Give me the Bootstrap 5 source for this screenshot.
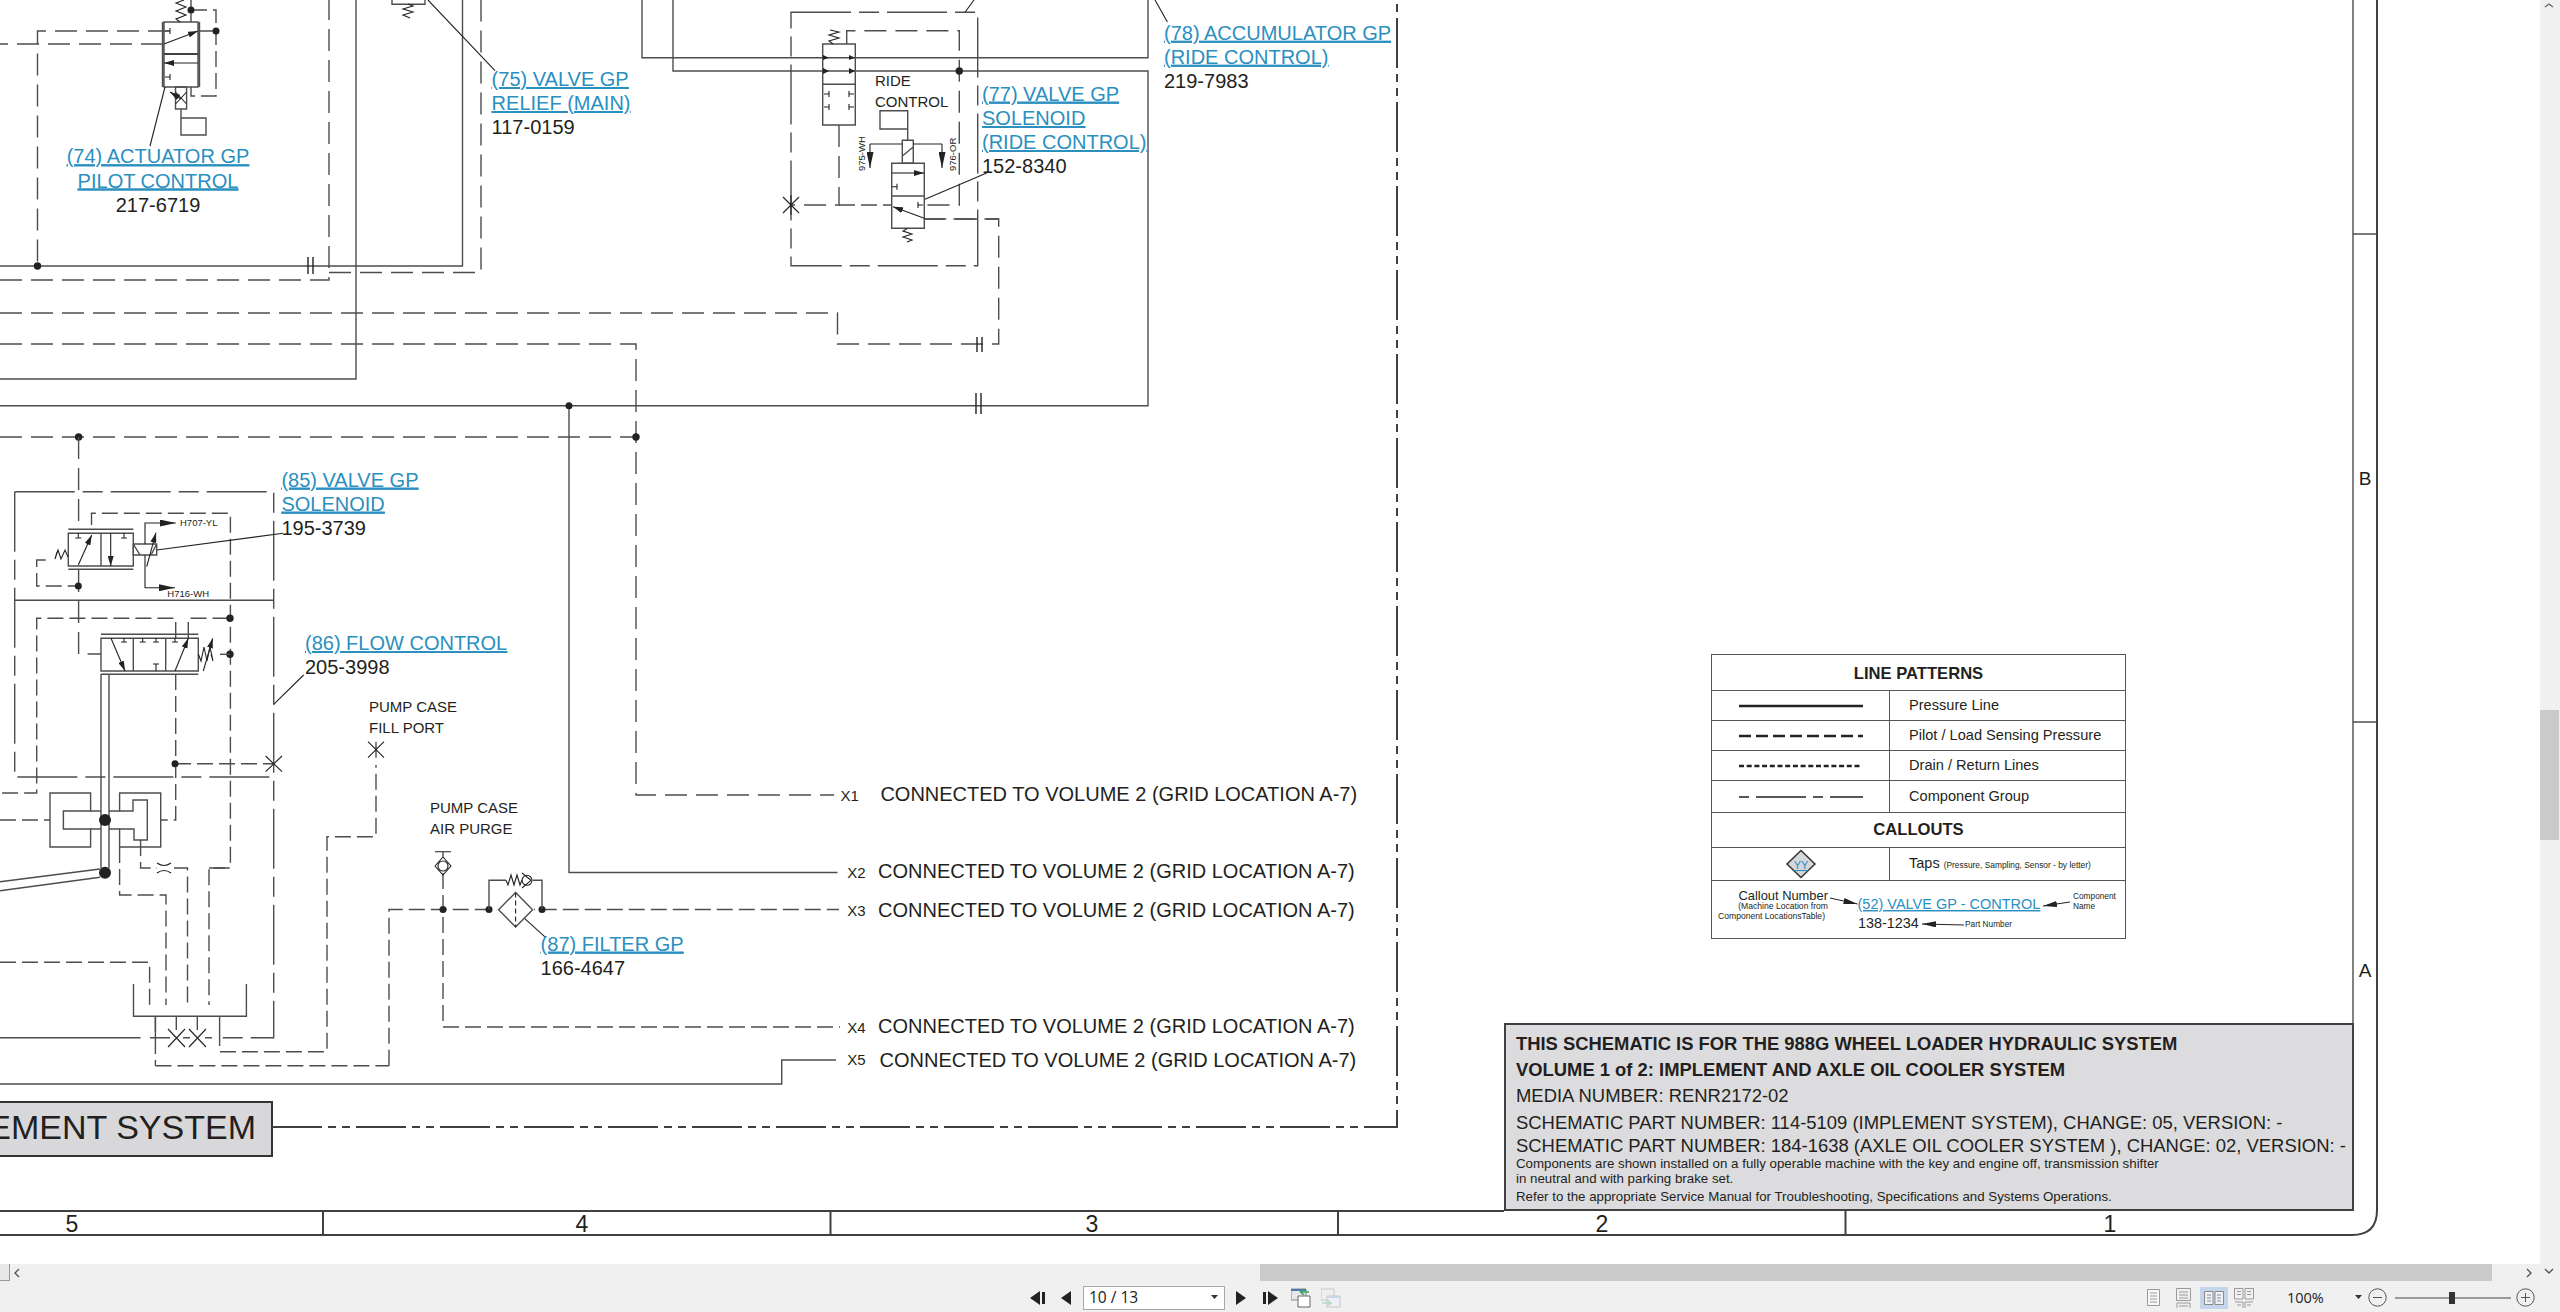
<!DOCTYPE html>
<html>
<head>
    <title>988G Hydraulic Schematic</title>
    <link href="https://cdn.jsdelivr.net/npm/bootstrap@5.3.2/dist/css/bootstrap.min.css" rel="stylesheet">
    <script src="https://cdn.jsdelivr.net/npm/bootstrap@5.3.2/dist/js/bootstrap.bundle.min.js"></script>
    <style>
        html, body { height: 100%; overflow: hidden; }
        body { font-family: "Liberation Sans", Arial, sans-serif; color: #231f20; background: #f0f0f0; }
        .viewer-top { height: 1281px; }
        .viewer-left { width: 2540px; }
        .sheet { height: 1264px; background: #fff; overflow: hidden; }
        .sheet-svg { display: block; }
        .sheet-svg text { font-family: "Liberation Sans", Arial, sans-serif; fill: #231f20; }
        .sheet-svg .part { font-size: 20px; }
        .sheet-svg .call { font-size: 20px; fill: #2b8fbf; text-decoration: underline; }
        .sheet-svg .conn { font-size: 20px; }
        .sheet-svg .note { font-size: 15px; }
        .sheet-svg .wire { font-size: 9.5px; }
        .sheet-svg .zone { font-size: 23px; }
        .sheet-svg .zone-side { font-size: 19px; }
        .sheet-svg .sys { font-size: 34px; }
        .ln { fill: none; stroke: #4d4d4d; stroke-width: 1.4; }
        .thin { fill: none; stroke: #222; stroke-width: 1.1; }
        .heavy { fill: none; stroke: #404040; stroke-width: 2; }
        .pilot { stroke-dasharray: 22 9; }
        .drain { stroke-dasharray: 16 6; }
        .longd { stroke-dasharray: 60 8 20 8; }
        .group { stroke-dasharray: 50 6 8 6 8 6; }
        .dot { fill: #222; }

        /* legend and title block sit on the sheet at their drawing coordinates */
        .legend-box { position: absolute; left: 1711px; top: 654px; width: 415px; }
        .legend-grid { table-layout: fixed; border-color: #555; color: #231f20; }
        .legend-grid td { padding: 0; background: transparent; vertical-align: middle; }
        .legend-grid .col-sample { width: 178px; }
        .legend-head { font-size: 16.6px; font-weight: 700; text-align: center; }
        .legend-first { padding-top: 3px !important; }
        .legend-text { font-size: 14.6px; padding-left: 19px !important; }
        .legend-small { font-size: 8.4px; }
        .legend-taps { font-size: 14.5px; }
        .rh-36 { height: 36px; }
        .rh-30 { height: 30px; }
        .rh-32 { height: 32px; }
        .rh-35 { height: 35px; }
        .rh-33 { height: 33px; }
        .legend-svg { display: block; }
        .legend-svg text { font-family: "Liberation Sans", Arial, sans-serif; fill: #231f20; }
        .title-block { position: absolute; left: 1504px; top: 1023px; width: 850px; height: 188px;
            background: #dcdcde; border: 2px solid #404040; padding-left: 10px; white-space: nowrap; }
        .tb-line { font-size: 18.45px; line-height: 26px; }
        .tb-strong { font-weight: 700; font-size: 18.4px; }
        .tb-first { margin-top: 5.5px; }
        .tb-tight { line-height: 20px; }
        .tb-wide { margin-top: 1px; }
        .tb-small { font-size: 13.3px; line-height: 15px; }
        .tb-last { margin-top: 3px; }

        .hbar { height: 17px; background: #f0f0f0; }
        .hbar-tab { width: 10px; height: 18px; border: 1px solid #999; border-left: 0; margin-top: -1px; background: #e8e8e8; }
        .hbar-left { margin-left: 2px; width: 1238px; }
        .hbar-thumb { width: 1232px; height: 17px; background: #cacaca; }
        .hbar-right { margin-left: 33px; }
        .vbar { width: 20px; background: #f0f0f0; }
        .vbar-gap { height: 697px; }
        .vbar-thumb { height: 130px; width: 19px; background: #cacaca; }

        .status { height: 31px; padding-top: 2px; background: #f0f0f0; font-family: "Open Sans", "Liberation Sans", sans-serif; font-size: 14.5px; color: #222; }
        .m-first { margin-left: 1030px; }
        .m-prev { margin-left: 15px; }
        .page-select { width: 142px; height: 24px; margin-left: 12px; background: #fff; border: 1px solid #a9a9a9; padding: 0 5px; font-size: 15.5px; }
        .m-next { margin-left: 11px; }
        .m-last { margin-left: 17px; }
        .m-view { margin-left: 12px; }
        .m-view2 { margin-left: 10px; }
        .m-layout { margin-left: 806px; }
        .m-layout2 { margin-left: 16px; }
        .m-layout3 { margin-left: 9px; }
        .m-layout4 { margin-left: 6px; }
        .layout-on { background: #c5d6ec; width: 28px; height: 22px; }
        .m-zoom { margin-left: 33px; width: 68px; }
        .m-slider { margin-left: 8px; }
        .m-plus { margin-left: 5px; }
    </style>
</head>
<body>
<div class="d-flex flex-column vh-100">
    <div class="d-flex viewer-top">
        <div class="viewer-left d-flex flex-column">
            <div class="sheet position-relative">
                <svg class="sheet-svg" width="2540" height="1264" viewBox="0 0 2540 1264">
                    <defs>
                        <marker id="ah" viewBox="0 0 10 6" refX="10" refY="3" markerWidth="10" markerHeight="6" markerUnits="userSpaceOnUse" orient="auto">
                            <path d="M0 0L10 3L0 6Z" fill="#222"/>
                        </marker>
                        <marker id="ahw" viewBox="0 0 16 7" refX="16" refY="3.5" markerWidth="16" markerHeight="7" markerUnits="userSpaceOnUse" orient="auto">
                            <path d="M0 0L16 3.5L0 7Z" fill="#222"/>
                        </marker>
                    </defs>

                    <!-- sheet frame -->
                    <path class="heavy" d="M2377 0V1210Q2377 1235 2352 1235H0"/>
                    <path class="ln" d="M2353 0V1023M2353 234H2377M2353 722H2377"/>
                    <path class="heavy" d="M0 1211H1504M323 1211V1235M830.5 1211V1235M1338 1211V1235M1845.5 1211V1235"/>
                    <text class="zone" x="72" y="1232" text-anchor="middle">5</text>
                    <text class="zone" x="582" y="1232" text-anchor="middle">4</text>
                    <text class="zone" x="1092" y="1232" text-anchor="middle">3</text>
                    <text class="zone" x="1602" y="1232" text-anchor="middle">2</text>
                    <text class="zone" x="2110" y="1232" text-anchor="middle">1</text>
                    <text class="zone-side" x="2365" y="485" text-anchor="middle">B</text>
                    <text class="zone-side" x="2365" y="977" text-anchor="middle">A</text>

                    <!-- system label and outer group line -->
                    <rect x="-20" y="1102" width="292" height="54" fill="#d8d8da" stroke="#333" stroke-width="2"/>
                    <text class="sys" x="256" y="1139" text-anchor="end">IMPLEMENT SYSTEM</text>
                    <path class="heavy group" d="M272 1127H1397V0"/>

                    <!-- main runs -->
                    <path class="ln" d="M0 266H462.5V0"/>
                    <path class="ln pilot" d="M0 280H329V0"/>
                    <path class="ln pilot" d="M329 272.5H481V0"/>
                    <path class="ln" d="M356 0V379H0"/>
                    <path class="ln pilot" d="M0 313H837.5V344H998.7V219H924.3"/>
                    <path class="ln pilot" d="M0 344H636V795H834"/>
                    <path class="ln" d="M0 405.7H1148V71H673V0M642 0V57.7H1148V0"/>
                    <path class="ln" d="M569 405.7V872.5H837.5"/>
                    <path class="ln pilot" d="M0 437H636"/>
                    <path class="ln" d="M0 1084H781.7V1060H836"/>
                    <path class="ln drain" d="M389 1065.7V909.5H839M155.4 1065.7H389M155.4 1016V1065.7"/>
                    <path class="ln drain" d="M443 873V1027H840"/>
                    <g class="thin">
                        <path d="M308 257V274M313 257V274M977 337V352M982 337V352M976 393V414M981 393V414" stroke-width="1.4"/>
                    </g>
                    <circle class="dot" cx="569" cy="405.7" r="3.5"/>
                    <circle class="dot" cx="37.5" cy="266" r="3.7"/>
                    <circle class="dot" cx="78.6" cy="437" r="3.7"/>
                    <circle class="dot" cx="636" cy="437" r="3.7"/>

                    <!-- actuator 74 -->
                    <path class="ln" d="M164 22H198V87H164ZM164 54H198M162.5 22V87M199.5 22V87"/>
                    <path class="heavy" d="M164 54H198" stroke-width="1.6"/>
                    <path class="thin" marker-end="url(#ah)" d="M164 44L198 31"/>
                    <path class="thin" marker-end="url(#ah)" d="M198 63H164"/>
                    <path class="thin" d="M165 31H170M170 28V34M165 77H170M170 74V80"/>
                    <path class="thin" d="M180 22L176 19L186 15L176 11L186 7L176 3L184 0"/>
                    <path class="ln drain" d="M191 10H216V96H191V87M199.5 31H216"/>
                    <path class="ln" d="M191 0V22"/>
                    <circle class="dot" cx="191" cy="10" r="3.5"/>
                    <circle class="dot" cx="216" cy="31" r="3.5"/>
                    <path class="ln" d="M175.5 87H186.6V109H175.5ZM181 109V118M181 118H206V135H181Z"/>
                    <path class="thin" d="M175.5 92L186.6 104M186.6 92L175.5 104"/>
                    <path class="thin" marker-end="url(#ah)" d="M181 99L170 92"/>
                    <path class="ln pilot" d="M163 44H0"/>
                    <path class="ln pilot" d="M170 31H37.5V266"/>
                    <path class="thin" d="M165 87L150 146"/>

                    <!-- relief 75 -->
                    <path class="ln" d="M392 0V4.3H425V0"/>
                    <path class="thin" d="M408 4L413 6L403 9L413 12L403 15L410 18"/>
                    <path class="thin" d="M428 0L495 70.7"/>

                    <!-- ride control group 77 -->
                    <path class="ln longd" d="M791 12.3H977.7V265.7H791Z"/>
                    <path class="thin" d="M965 12.3L974 0M1155 0L1167.4 22"/>
                    <path class="ln" d="M822.7 44H855.3V125H822.7ZM822.7 84.3H855.3"/>
                    <path class="thin" d="M833 44L829 41L839 38L829 35L839 32L830 30"/>
                    <path d="M823 55L829 57.7L823 60ZM823 68L829 71L823 74ZM849 55L855 57.7L849 60ZM849 68L855 71L849 74Z" fill="#222"/>
                    <path class="thin" d="M824 94H829M829 91V97M824 107H829M829 104V110M854 94H849M849 91V97M854 107H849M849 104V110"/>
                    <path class="ln pilot" d="M846.7 44V30.7H959.3V205H918"/>
                    <path class="ln pilot" d="M839 125V205H791"/>
                    <path class="ln drain" d="M839 205H892"/>
                    <circle class="dot" cx="959.3" cy="71" r="3.7"/>
                    <path class="thin" d="M783 197L799 213M799 197L783 213M791 195V215"/>
                    <text class="note" x="875" y="86">RIDE</text>
                    <text class="note" x="875" y="107">CONTROL</text>
                    <path class="ln" d="M880 110.7H907.7V129H880ZM907.7 129V140.3M902.3 140.3H913.3V163.3H902.3ZM902.3 156L913.3 147"/>
                    <path class="thin" marker-end="url(#ahw)" d="M870 144V168"/>
                    <path class="thin" marker-end="url(#ahw)" d="M942 144V168"/>
                    <path class="thin" d="M870 144H902M913 144H942"/>
                    <text class="wire" transform="translate(865 171) rotate(-90)" font-size="9">975-WH</text>
                    <text class="wire" transform="translate(956 171) rotate(-90)" font-size="9">976-OR</text>
                    <path class="ln" d="M891.7 163.3H924.3V228.3H891.7ZM891.7 196H924.3"/>
                    <path class="thin" marker-end="url(#ah)" d="M892 173H924"/>
                    <path class="thin" d="M892 186.7H897M897 183.7V189.7M923 205H918M918 202V208"/>
                    <path class="thin" marker-end="url(#ah)" d="M924.3 218.3L893 206.7"/>
                    <path class="thin" d="M907.7 228.3L903 231L912 234L903 237L912 240L907 242"/>
                    <path class="thin" d="M925 199.3L986.7 173"/>
                    <path class="ln pilot" d="M924.3 219H998.7"/>

                    <!-- solenoid valve 85 -->
                    <path class="ln longd" d="M14.7 491.7H273.7V1037.7H218.8M14.7 491.7V777H273.7"/>
                    <path class="ln" d="M14.7 600.3H273.7"/>
                    <path class="ln drain" d="M91.5 525V513.3H230.4V868H209V1005"/>
                    <path class="ln pilot" d="M78.6 437V530M78.6 570V654H101"/>
                    <path class="ln" d="M68.3 533.3H133.3V566H68.3ZM101 533.3V566M68.3 529.3H133.3M68.3 569.3H133.3"/>
                    <path class="thin" marker-end="url(#ah)" d="M78.3 565L91.7 535"/>
                    <path class="thin" marker-end="url(#ah)" d="M110.7 533.3V566"/>
                    <path class="thin" d="M78.3 533V538M75.3 538H81.3M124 533V538M121 538H127"/>
                    <path class="thin" d="M68 557L65 550L61 559L58 550L55 559L57 552"/>
                    <path class="ln drain" d="M45.7 560H36.7V586H75"/>
                    <circle class="dot" cx="78.3" cy="586" r="3.5"/>
                    <path class="ln" d="M133.3 544H156.7V555H133.3ZM133.3 544L140 555H151L156.7 544"/>
                    <path class="thin" marker-end="url(#ah)" d="M146.7 566.7L156 532.7"/>
                    <path class="thin" marker-end="url(#ahw)" d="M145 544V523H175.7"/>
                    <path class="thin" marker-end="url(#ahw)" d="M145 555V587.7H175"/>
                    <text class="wire" x="180" y="525.7">H707-YL</text>
                    <text class="wire" x="167.3" y="596.7">H716-WH</text>
                    <path class="thin" d="M156.7 550L283 533.3"/>

                    <!-- flow control 86 -->
                    <path class="ln drain" d="M175.7 638V618.3H36.7V793H0M188.3 638V618.3H230M175.7 674V820H160.7M0 820H50"/>
                    <path class="ln drain" d="M175 763.7H273.7"/>
                    <circle class="dot" cx="230" cy="618.3" r="3.7"/>
                    <circle class="dot" cx="230" cy="654.3" r="3.7"/>
                    <circle class="dot" cx="175" cy="763.7" r="3.5"/>
                    <path class="ln" d="M101 638.3H198.3V671H101ZM133.3 638.3V671M165.7 638.3V671M101 634.3H198.3M101 674.3H198.3"/>
                    <path class="thin" marker-end="url(#ah)" d="M111 638.3L125 671"/>
                    <path class="thin" marker-end="url(#ah)" d="M175 671L188.3 638.3"/>
                    <path class="thin" d="M124 638V642M121 642H127M142.7 638V642M139.7 642H145.7M156 638V642M153 642H159M175 638V642M172 642H178M156 671V664M153 664H159"/>
                    <path class="thin" d="M198.3 654L201 661L204 647L207 661L210 647L213 661L211 654"/>
                    <path class="thin" marker-end="url(#ah)" d="M203.3 671L212.7 638.3"/>
                    <path class="ln drain" d="M220 654.3H230"/>
                    <path class="thin" d="M265.6 756L282 771.7M282 756L265.6 771.7"/>
                    <path class="thin" d="M273.7 704.3L303.6 675"/>

                    <!-- pump and tank -->
                    <path class="ln" d="M101 674V868M109 674V868"/>
                    <path class="ln" d="M100 869L0 881.7M100 877.3L0 890.7"/>
                    <ellipse class="dot" cx="105" cy="820" rx="6" ry="6"/>
                    <ellipse class="dot" cx="105" cy="872.7" rx="6" ry="6"/>
                    <path class="ln" d="M90.6 793H50V847H90.6V829H63.4V811H90.6ZM119.6 793H160.7V847H119.6V829H134V840H147.3V800H133V811H119.6Z"/>
                    <path class="ln" d="M90.6 811H101M109 811H119.6M90.6 829H101M109 829H119.6"/>
                    <path class="ln drain" d="M140.6 840V868H157M174 868H187.5V1005M209 868H230M119.6 847V895H166V1005"/>
                    <path class="thin" d="M157 863Q164 868 171 863M157 873Q164 868 171 873"/>
                    <path class="ln drain" d="M0 962.3H149.6V1006"/>
                    <path class="ln" d="M133.5 984V1016.3H246.4V984"/>
                    <path class="ln" d="M176.3 1016V1030M197.3 1016V1030M155.4 1016V1037M219.6 1016V1030M0 1037.7H140.6M150 1037.7H170M183 1037.7H190M205 1037.7H212"/>
                    <path class="thin" d="M168 1029L185 1047M185 1029L168 1047M189 1029L206 1047M206 1029L189 1047"/>
                    <path class="ln drain" d="M219.6 1030V1051.7H327V836.7H376V765"/>
                    <path class="thin" d="M368 741.7L384 757.7M384 741.7L368 757.7M376 741.7V757.7"/>
                    <text class="note" x="369" y="711.7">PUMP CASE</text>
                    <text class="note" x="369" y="732.5">FILL PORT</text>
                    <text class="note" x="430" y="813">PUMP CASE</text>
                    <text class="note" x="430" y="834.3">AIR PURGE</text>

                    <!-- air purge and filter 87 -->
                    <path class="thin" d="M435 851.7H451M443 851.7V858M435 866L443 857L451 866L443 875Z"/>
                    <circle class="thin" cx="443" cy="866" r="5" fill="#fff"/>
                    <circle class="dot" cx="443" cy="909.5" r="3.5"/>
                    <circle class="dot" cx="489" cy="909.5" r="3.5"/>
                    <circle class="dot" cx="542" cy="909.5" r="3.5"/>
                    <rect x="497" y="890" width="37" height="37" fill="#fff"/>
                    <path class="ln" d="M515.6 892.4L532.6 909.7L515.6 927L498.6 909.7Z"/>
                    <path class="thin" stroke-dasharray="5 3" d="M515.6 892.4V927"/>
                    <path class="ln" d="M489 909.5V880.3H506M533 880.3H542V909.5"/>
                    <path class="thin" d="M506 880.3L508 885L511 875L514 885L517 875L520 885L522 880"/>
                    <circle class="thin" cx="527" cy="880.3" r="5"/>
                    <path class="thin" d="M522 873L531 880.3L522 888"/>
                    <path class="thin" d="M524.5 918.3L545.5 937.3"/>

                    <!-- callouts -->
                    <a href="#"><text class="call" x="158" y="163.3" text-anchor="middle">(74) ACTUATOR GP</text></a>
                    <a href="#"><text class="call" x="158" y="187.5" text-anchor="middle">PILOT CONTROL</text></a>
                    <text class="part" x="158" y="211.5" text-anchor="middle">217-6719</text>
                    <a href="#"><text class="call" x="491.6" y="86">(75) VALVE GP</text></a>
                    <a href="#"><text class="call" x="491.6" y="110">RELIEF (MAIN)</text></a>
                    <text class="part" x="491.6" y="133.5">117-0159</text>
                    <a href="#"><text class="call" x="982" y="100.7">(77) VALVE GP</text></a>
                    <a href="#"><text class="call" x="982" y="125">SOLENOID</text></a>
                    <a href="#"><text class="call" x="982" y="149">(RIDE CONTROL)</text></a>
                    <text class="part" x="982" y="172.7">152-8340</text>
                    <a href="#"><text class="call" x="1164" y="39.8">(78) ACCUMULATOR GP</text></a>
                    <a href="#"><text class="call" x="1164" y="63.8">(RIDE CONTROL)</text></a>
                    <text class="part" x="1164" y="87.8">219-7983</text>
                    <a href="#"><text class="call" x="281.4" y="486.7">(85) VALVE GP</text></a>
                    <a href="#"><text class="call" x="281.4" y="510.7">SOLENOID</text></a>
                    <text class="part" x="281.4" y="535">195-3739</text>
                    <a href="#"><text class="call" x="305" y="650">(86) FLOW CONTROL</text></a>
                    <text class="part" x="305" y="674">205-3998</text>
                    <a href="#"><text class="call" x="540.6" y="950.7">(87) FILTER GP</text></a>
                    <text class="part" x="540.6" y="975">166-4647</text>

                    <!-- off-sheet connections -->
                    <text class="note" x="840.6" y="800.5">X1</text>
                    <text class="conn" x="880.4" y="800.7">CONNECTED TO VOLUME 2 (GRID LOCATION A-7)</text>
                    <text class="note" x="847.3" y="877.5">X2</text>
                    <text class="conn" x="878" y="878.3">CONNECTED TO VOLUME 2 (GRID LOCATION A-7)</text>
                    <text class="note" x="847.3" y="915.5">X3</text>
                    <text class="conn" x="878" y="916.7">CONNECTED TO VOLUME 2 (GRID LOCATION A-7)</text>
                    <text class="note" x="847.3" y="1032.5">X4</text>
                    <text class="conn" x="878" y="1033.3">CONNECTED TO VOLUME 2 (GRID LOCATION A-7)</text>
                    <text class="note" x="847.3" y="1065">X5</text>
                    <text class="conn" x="879.5" y="1067.3">CONNECTED TO VOLUME 2 (GRID LOCATION A-7)</text>
                </svg>

                <div class="legend-box">
                    <table class="table table-bordered legend-grid mb-0">
                        <colgroup><col class="col-sample"><col></colgroup>
                        <tr class="rh-36"><td colspan="2" class="legend-head legend-first">LINE PATTERNS</td></tr>
                        <tr class="rh-30">
                            <td><svg class="legend-svg" width="178" height="12"><path d="M27 6H151" stroke="#222" stroke-width="2.6"/></svg></td>
                            <td class="legend-text">Pressure Line</td>
                        </tr>
                        <tr class="rh-30">
                            <td><svg class="legend-svg" width="178" height="12"><path d="M27 6H151" stroke="#222" stroke-width="2.6" stroke-dasharray="12 5"/></svg></td>
                            <td class="legend-text">Pilot / Load Sensing Pressure</td>
                        </tr>
                        <tr class="rh-30">
                            <td><svg class="legend-svg" width="178" height="12"><path d="M27 6H149" stroke="#222" stroke-width="2.6" stroke-dasharray="5 2.7"/></svg></td>
                            <td class="legend-text">Drain / Return Lines</td>
                        </tr>
                        <tr class="rh-32">
                            <td><svg class="legend-svg" width="178" height="12"><path d="M27 6H151" stroke="#222" stroke-width="1.6" stroke-dasharray="10 7 50 7"/></svg></td>
                            <td class="legend-text">Component Group</td>
                        </tr>
                        <tr class="rh-35"><td colspan="2" class="legend-head">CALLOUTS</td></tr>
                        <tr class="rh-33">
                            <td>
                                <svg class="legend-svg" width="178" height="30">
                                    <path d="M89 1.5L103 15L89 28.5L75 15Z" fill="#d4d8dc" stroke="#333" stroke-width="1.5"/>
                                    <text x="89" y="20" text-anchor="middle" font-size="11" style="fill:#2b8fbf;text-decoration:underline">YY</text>
                                </svg>
                            </td>
                            <td class="legend-text"><span class="legend-taps">Taps</span> <span class="legend-small">(Pressure, Sampling, Sensor - by letter)</span></td>
                        </tr>
                        <tr>
                            <td colspan="2">
                                <svg class="legend-svg" width="413" height="57">
                                    <defs>
                                        <marker id="ahl" viewBox="0 0 14 6" refX="14" refY="3" markerWidth="14" markerHeight="6" markerUnits="userSpaceOnUse" orient="auto">
                                            <path d="M0 0L14 3L0 6Z" fill="#222"/>
                                        </marker>
                                    </defs>
                                    <text x="116" y="18.5" text-anchor="end" font-size="12.9">Callout Number</text>
                                    <text x="116" y="28" text-anchor="end" font-size="8.6">(Machine Location from</text>
                                    <text x="113" y="38" text-anchor="end" font-size="8.6">Component LocationsTable)</text>
                                    <text x="145.5" y="28" font-size="14.5" style="fill:#2b8fbf;text-decoration:underline">(52) VALVE GP - CONTROL</text>
                                    <text x="146" y="46.5" font-size="14.4">138-1234</text>
                                    <text x="361" y="17.5" font-size="8.3">Component</text>
                                    <text x="361" y="27.5" font-size="8.3">Name</text>
                                    <text x="253" y="46" font-size="8.3">Part Number</text>
                                    <path d="M118 17L145.5 23" stroke="#222" fill="none" marker-end="url(#ahl)"/>
                                    <path d="M358 21L331 25" stroke="#222" fill="none" marker-end="url(#ahl)"/>
                                    <path d="M252 44L210 43" stroke="#222" fill="none" marker-end="url(#ahl)"/>
                                </svg>
                            </td>
                        </tr>
                    </table>
                </div>

                <div class="title-block">
                    <div class="tb-line tb-strong tb-first">THIS SCHEMATIC IS FOR THE 988G WHEEL LOADER HYDRAULIC SYSTEM</div>
                    <div class="tb-line tb-strong">VOLUME 1 of 2: IMPLEMENT AND AXLE OIL COOLER SYSTEM</div>
                    <div class="tb-line">MEDIA NUMBER: RENR2172-02</div>
                    <div class="tb-line tb-wide">SCHEMATIC PART NUMBER: 114-5109 (IMPLEMENT SYSTEM), CHANGE: 05, VERSION: -</div>
                    <div class="tb-line tb-tight">SCHEMATIC PART NUMBER: 184-1638 (AXLE OIL COOLER SYSTEM ), CHANGE: 02, VERSION: -</div>
                    <div class="tb-small">Components are shown installed on a fully operable machine with the key and engine off, transmission shifter</div>
                    <div class="tb-small">in neutral and with parking brake set.</div>
                    <div class="tb-small tb-last">Refer to the appropriate Service Manual for Troubleshooting, Specifications and Systems Operations.</div>
                </div>
            </div>

            <div class="hbar d-flex align-items-center">
                <div class="hbar-tab"></div>
                <svg class="ms-1" width="6" height="10"><path d="M5 1L1 5L5 9" fill="none" stroke="#555" stroke-width="1.4"/></svg>
                <div class="hbar-left"></div>
                <div class="hbar-thumb"></div>
                <svg class="hbar-right" width="8" height="10"><path d="M2 1L6 5L2 9" fill="none" stroke="#555" stroke-width="1.4"/></svg>
            </div>
        </div>

        <div class="vbar d-flex flex-column">
            <svg class="ms-1" width="12" height="13"><path d="M1 7L5 4L9 7" fill="none" stroke="#666" stroke-width="1.3"/></svg>
            <div class="vbar-gap"></div>
            <div class="vbar-thumb"></div>
            <div class="flex-grow-1"></div>
            <svg class="ms-1 mb-1" width="12" height="10"><path d="M1 2L5 6L9 2" fill="none" stroke="#555" stroke-width="1.4"/></svg>
        </div>
    </div>

    <div class="status d-flex align-items-center">
        <svg class="m-first" width="16" height="14"><path d="M0 7L10 0V14ZM12 1H15V13H12Z" fill="#222"/></svg>
        <svg class="m-prev" width="10" height="14"><path d="M0 7L10 0V14Z" fill="#222"/></svg>
        <div class="page-select d-flex align-items-center justify-content-between">
            <span>10 / 13</span>
            <svg width="8" height="5"><path d="M0 0H7L3.5 4Z" fill="#333"/></svg>
        </div>
        <svg class="m-next" width="10" height="14"><path d="M0 0L10 7L0 14Z" fill="#222"/></svg>
        <svg class="m-last" width="16" height="14"><path d="M0 1H3V13H0ZM5 0L15 7L5 14Z" fill="#222"/></svg>
        <svg class="m-view" width="20" height="20">
            <path d="M0 1H15V12H0Z" fill="#e8e8e8" stroke="#8a8a8a"/><path d="M0 1H15V3H0Z" fill="#4f78b5"/>
            <path d="M7 8H19V19H7Z" fill="#fff" stroke="#666"/><path d="M18 4H10M13 1L9.5 4L13 7" fill="none" stroke="#3aa55c" stroke-width="1.6"/>
        </svg>
        <svg class="m-view2" width="20" height="20" opacity=".45">
            <path d="M0 1H13V12H0Z" fill="#eee" stroke="#999"/><path d="M6 8H19V19H6Z" fill="#eef" stroke="#999"/><path d="M6 8H19V10H6Z" fill="#9db6d8"/>
            <path d="M1 15H9M6 12L10 15L6 18" fill="none" stroke="#6fc08a" stroke-width="1.5"/>
        </svg>

        <svg class="m-layout" width="13" height="17"><path d="M.5 .5H12.5V16.5H.5Z" fill="#f7f7f7" stroke="#9a9a9a"/><path d="M3 4H10M3 7H10M3 10H10M3 13H10" stroke="#9a9a9a"/></svg>
        <svg class="m-layout2" width="15" height="20"><path d="M.5 .5H14.5V12.5H.5ZM1 15V20M14 15V20M1 15H14" fill="none" stroke="#9a9a9a"/><path d="M3 4H12M3 7H12M3 10H12M3 18H12" stroke="#9a9a9a"/></svg>
        <div class="layout-on m-layout3 d-flex align-items-center justify-content-center">
            <svg width="20" height="14"><path d="M.5 .5H9V13.5H.5ZM11 .5H19.5V13.5H11Z" fill="#eef2f7" stroke="#8a8a8a"/><path d="M3 4H7M3 7H7M3 10H7M13 4H17M13 7H17M13 10H17" stroke="#8a8a8a"/></svg>
        </div>
        <svg class="m-layout4" width="20" height="20"><path d="M.5 .5H9V11H.5ZM11 .5H19.5V11H11ZM1 14H9V20M11 20V14H19" fill="none" stroke="#9a9a9a"/><path d="M3 3.5H7M3 6.5H7M13 3.5H17M13 6.5H17M3 17H7M13 17H17" stroke="#9a9a9a"/></svg>

        <span class="m-zoom">100%</span>
        <svg width="8" height="5"><path d="M0 0H7L3.5 4Z" fill="#333"/></svg>
        <svg class="m-plus" width="19" height="19"><circle cx="9.5" cy="9.5" r="8.7" fill="none" stroke="#555"/><path d="M5 9.5H14" stroke="#555"/></svg>
        <svg class="m-slider" width="116" height="14"><path d="M0 7H116" stroke="#444"/><rect x="54" y="1" width="6" height="12" fill="#333"/></svg>
        <svg class="m-plus" width="19" height="19"><circle cx="9.5" cy="9.5" r="8.7" fill="none" stroke="#555"/><path d="M5 9.5H14M9.5 5V14" stroke="#555"/></svg>
    </div>
</div>
</body>
</html>
